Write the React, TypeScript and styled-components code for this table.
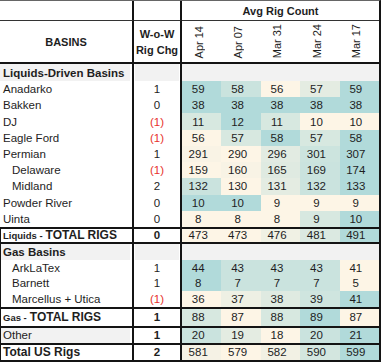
import React from 'react';
import styled, { createGlobalStyle } from 'styled-components';

const GlobalStyle = createGlobalStyle`
  html, body { margin: 0; padding: 0; background: #fff; }
  body { font-family: "Liberation Sans", Arial, sans-serif; color: #1e1e1e; }
`;

const LINE = '#141414';
const COLS = '134px 48px repeat(5, 1fr)';

const Table = styled.div`
  width: 381px;
  box-sizing: border-box;
  border-top: 1px solid #666;
  border-right: 2px solid ${LINE};
  display: flex;
  flex-direction: column;
  font-size: 11.5px;
`;

const Head = styled.div`
  display: grid;
  grid-template-columns: ${COLS};
  grid-template-rows: 20px 41px;
  border-bottom: 2px solid ${LINE};
`;

const HeadBlank = styled.div`
  border-bottom: 1px solid #333;
  border-right: 2px solid ${LINE};
`;

const GroupTitle = styled.div`
  grid-column: 3 / span 5;
  border-bottom: 1px solid #333;
  display: flex;
  align-items: center;
  justify-content: center;
  font-weight: bold;
  font-size: 11px;
`;

const HeadLabel = styled.div`
  border-right: 2px solid ${LINE};
  display: flex;
  align-items: center;
  justify-content: center;
  text-align: center;
  font-weight: bold;
  font-size: 11px;
  line-height: 16px;
`;

const DateCell = styled.div`
  display: flex;
  justify-content: center;
  align-items: flex-end;
  padding: 0 6px 4px 0;
`;

const DateText = styled.span`
  writing-mode: vertical-rl;
  transform: rotate(180deg);
  font-size: 11px;
  line-height: 12px;
  white-space: nowrap;
`;

const Row = styled.div<{ $h: number; $rule?: boolean }>`
  display: grid;
  grid-template-columns: ${COLS};
  height: ${p => p.$h}px;
  border-bottom: ${p => (p.$rule ? `2px solid ${LINE}` : 'none')};
`;

const Name = styled.div<{ $indent?: boolean; $shade?: boolean; $edge?: boolean; $bold?: boolean; $size?: number }>`
  border-right: 2px solid ${LINE};
  display: flex;
  align-items: center;
  padding-left: ${p => (p.$indent ? 12 : 3)}px;
  background: ${p => (p.$shade ? '#f2f2f2' : '#fff')};
  box-shadow: inset -2px 0 0 #fff${p => (p.$edge ? `, inset 1px 0 0 ${LINE}` : '')};
  font-weight: ${p => (p.$bold ? 'bold' : 'normal')};
  font-size: ${p => p.$size ?? 11.5}px;
  white-space: nowrap;
  overflow: hidden;
`;

const Prefix = styled.span`
  font-size: 9.5px;
  margin-right: 3px;
`;

const Change = styled.div<{ $neg?: boolean; $bold?: boolean; $shade?: boolean }>`
  border-right: 2px solid ${LINE};
  display: flex;
  align-items: center;
  justify-content: center;
  background: ${p => (p.$shade ? '#f2f2f2' : '#fff')};
  box-shadow: inset 1px 0 0 #fff, inset -1px 0 0 #fff;
  color: ${p => (p.$neg ? '#e8312c' : 'inherit')};
  font-weight: ${p => (p.$bold ? 'bold' : 'normal')};
`;

const Value = styled.div`
  display: flex;
  align-items: center;
  justify-content: center;
  padding-right: 7px;
`;

const Band = styled.div`
  grid-column: 3 / span 5;
  background: #f2f2f2;
`;

const CREAM = [253, 245, 230];
const TEAL = [177, 218, 218];

function heat(v: number, vals: number[]): string {
  const min = Math.min(...vals);
  const max = Math.max(...vals);
  const t = max === min ? 1 : (v - min) / (max - min);
  const c = CREAM.map((a, i) => Math.round(a + (TEAL[i] - a) * t));
  return `rgb(${c[0]},${c[1]},${c[2]})`;
}

type Kind = 'section' | 'item' | 'sub' | 'total' | 'other' | 'grand';

interface Line {
  kind: Kind;
  name: string;
  prefix?: string;
  chg?: number;
  vals?: number[];
  h: number;
  rule?: boolean;
  edge?: boolean;
}

const LIQ = 146 / 9;
const GAS = 47 / 3;

const rows: Line[] = [
  { kind: 'section', name: 'Liquids-Driven Basins', h: 17 },
  { kind: 'item', name: 'Anadarko', chg: 1, vals: [59, 58, 56, 57, 59], h: LIQ },
  { kind: 'item', name: 'Bakken', chg: 0, vals: [38, 38, 38, 38, 38], h: LIQ },
  { kind: 'item', name: 'DJ', chg: -1, vals: [11, 12, 11, 10, 10], h: LIQ },
  { kind: 'item', name: 'Eagle Ford', chg: -1, vals: [56, 57, 58, 57, 58], h: LIQ },
  { kind: 'item', name: 'Permian', chg: 1, vals: [291, 290, 296, 301, 307], h: LIQ },
  { kind: 'sub', name: 'Delaware', chg: -1, vals: [159, 160, 165, 169, 174], h: LIQ },
  { kind: 'sub', name: 'Midland', chg: 2, vals: [132, 130, 131, 132, 133], h: LIQ },
  { kind: 'item', name: 'Powder River', chg: 0, vals: [10, 10, 9, 9, 9], h: LIQ },
  { kind: 'item', name: 'Uinta', chg: 0, vals: [8, 8, 8, 9, 10], h: LIQ, rule: true },
  { kind: 'total', prefix: 'Liquids -', name: 'TOTAL RIGS', chg: 0, vals: [473, 473, 476, 481, 491], h: 13, rule: true, edge: true },
  { kind: 'section', name: 'Gas Basins', h: 16, edge: true },
  { kind: 'sub', name: 'ArkLaTex', chg: 1, vals: [44, 43, 43, 43, 41], h: GAS, edge: true },
  { kind: 'sub', name: 'Barnett', chg: 1, vals: [8, 7, 7, 7, 5], h: GAS, edge: true },
  { kind: 'sub', name: 'Marcellus + Utica', chg: -1, vals: [36, 37, 38, 39, 41], h: GAS, rule: true, edge: true },
  { kind: 'total', prefix: 'Gas -', name: 'TOTAL RIGS', chg: 1, vals: [88, 87, 88, 89, 87], h: 17, rule: true, edge: true },
  { kind: 'other', name: 'Other', chg: 1, vals: [20, 19, 18, 20, 21], h: 15, rule: true, edge: true },
  { kind: 'grand', name: 'Total US Rigs', chg: 2, vals: [581, 579, 582, 590, 599], h: 15, rule: true, edge: true },
];

const dates = ['Apr 14', 'Apr 07', 'Mar 31', 'Mar 24', 'Mar 17'];

const fmt = (n: number) => (n < 0 ? `(${Math.abs(n)})` : String(n));

export default function App() {
  return (
    <>
      <GlobalStyle />
      <Table>
        <Head>
          <HeadBlank />
          <HeadBlank />
          <GroupTitle>Avg Rig Count</GroupTitle>
          <HeadLabel>BASINS</HeadLabel>
          <HeadLabel>
            W-o-W
            <br />
            Rig Chg
          </HeadLabel>
          {dates.map(d => (
            <DateCell key={d}>
              <DateText>{d}</DateText>
            </DateCell>
          ))}
        </Head>
        {rows.map((r, i) => {
          const isSection = r.kind === 'section';
          const isTotal = r.kind === 'total' || r.kind === 'grand';
          const strongChg = r.kind === 'total' || r.kind === 'other' || r.kind === 'grand';
          return (
            <Row key={i} $h={r.h} $rule={r.rule}>
              <Name
                $indent={r.kind === 'sub'}
                $shade={isSection || r.kind === 'other'}
                $edge={r.edge}
                $bold={isSection || isTotal}
                $size={isTotal ? 12 : isSection ? 11.5 : 11.5}
              >
                {r.prefix && <Prefix>{r.prefix}</Prefix>}
                {r.name}
              </Name>
              {isSection ? (
                <>
                  <Change $shade />
                  <Band />
                </>
              ) : (
                <>
                  <Change $neg={(r.chg ?? 0) < 0} $bold={strongChg}>
                    {fmt(r.chg ?? 0)}
                  </Change>
                  {r.vals!.map((v, j) => (
                    <Value key={j} style={{ background: heat(v, r.vals!) }}>
                      {v}
                    </Value>
                  ))}
                </>
              )}
            </Row>
          );
        })}
      </Table>
    </>
  );
}
